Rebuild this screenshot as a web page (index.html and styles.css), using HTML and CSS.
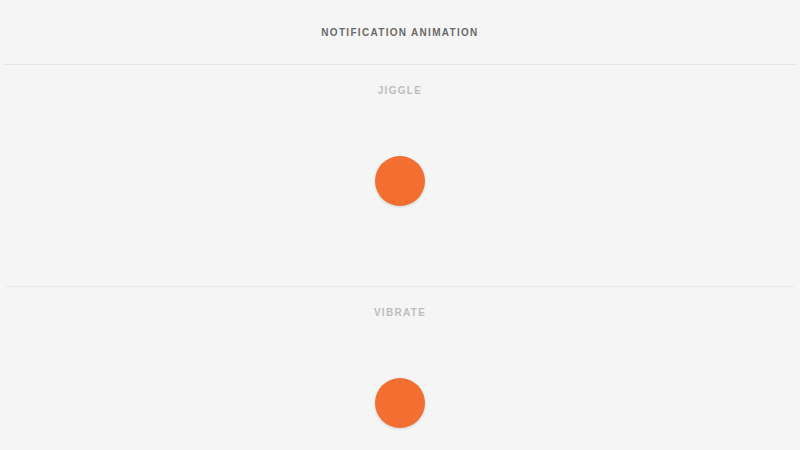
FILE: index.html
```html
<!DOCTYPE html>
<html lang="en">
<head>
    <meta charset="UTF-8">
    <meta name="viewport" content="width=device-width, initial-scale=1.0">
    <title>Notification Animation</title>
    <link rel="stylesheet" href="styles.css">
</head>
<body>
    <header class="page-header">
        <h1>Notification Animation</h1>
    </header>

    <ul class="demo-list">
        <li class="demo">
            <h2 class="demo-title">Jiggle</h2>
            <div class="demo-stage">
                <span class="dot"></span>
            </div>
        </li>
        <li class="demo">
            <h2 class="demo-title">Vibrate</h2>
            <div class="demo-stage">
                <span class="dot"></span>
            </div>
        </li>
    </ul>
</body>
</html>
```

FILE: styles.css
```css
body {
    font-family: "Liberation Sans", Arial, sans-serif;
    margin: 0;
    padding: 0 4px;
    background-color: #f5f5f5;
}
.page-header {
    height: 65px;
    display: flex;
    align-items: center;
    justify-content: center;
    border-bottom: 1px solid #e6e6e6;
    box-sizing: border-box;
}
.page-header h1 {
    margin: 0;
    font-size: 10px;
    font-weight: bold;
    letter-spacing: 1.3px;
    text-transform: uppercase;
    color: #6a6a6a;
}
.demo-list {
    list-style: none;
    margin: 0;
    padding: 0 2px;
}
.demo {
    height: 222px;
    box-sizing: border-box;
    padding-top: 19px;
    border-top: 1px solid #e8e8e8;
}
.demo:first-child {
    height: 221px;
    border-top: none;
}
.demo-title {
    margin: 0;
    text-align: center;
    font-size: 10px;
    font-weight: bold;
    letter-spacing: 1.3px;
    text-transform: uppercase;
    color: #bdbdbd;
    line-height: 13px;
}
.demo-stage {
    display: flex;
    justify-content: center;
    padding-top: 59px;
}
.dot {
    display: block;
    width: 50px;
    height: 50px;
    border-radius: 50%;
    background-color: #f36f31;
    box-shadow: 0 1px 3px rgba(0, 0, 0, 0.15);
}
```
